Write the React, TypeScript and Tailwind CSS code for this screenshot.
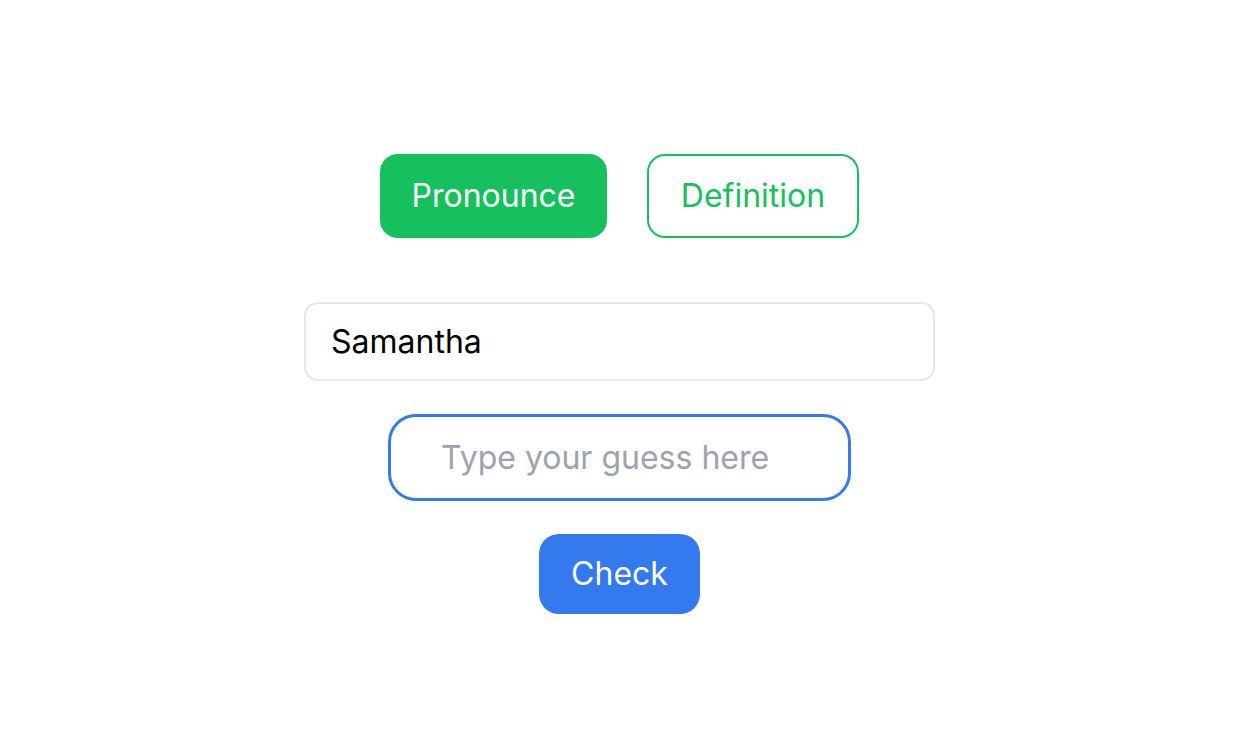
export default function App() {
  return (
    <div
      className="flex min-h-screen w-full justify-center bg-white pl-[6px] pt-[154px]"
      style={{ fontFamily: "Inter, 'Noto Sans', sans-serif" }}
    >
      <main className="flex flex-col items-center">
        <div className="flex gap-10">
          <button className="h-[84px] w-[227px] rounded-[18px] bg-[#16c05c] text-[32px] text-white">
            Pronounce
          </button>
          <button className="h-[84px] w-[212px] rounded-[18px] border-2 border-[#16c05c] bg-white text-[32px] text-[#16c05c]">
            Definition
          </button>
        </div>

        <div className="mt-16 flex h-[79px] w-[631px] items-center rounded-[14px] border-2 border-[#e5e7eb] px-[25px] text-[32px] text-black">
          Samantha
        </div>

        <input
          className="mt-[33px] h-[87px] w-[463px] rounded-[28px] border-[3px] border-[#3579ef] px-[50px] text-[32px] text-black outline-none placeholder:text-[#9ca3af]"
          placeholder="Type your guess here"
        />

        <button className="mt-[33px] h-[80px] w-[161px] rounded-[20px] bg-[#3579ef] text-[32px] text-white">
          Check
        </button>
      </main>
    </div>
  );
}
